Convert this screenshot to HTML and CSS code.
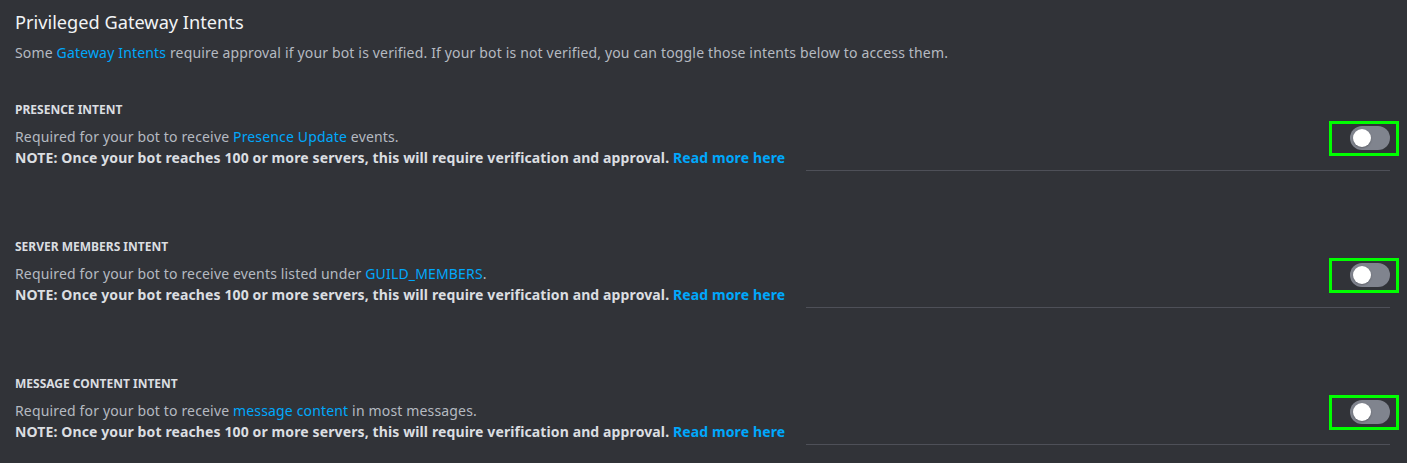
FILE: index.html
```html
<!DOCTYPE html>
<html>
<head>
<meta charset="utf-8">
<link rel="stylesheet" href="styles.css">
</head>
<body>
<div class="page">
  <h1 class="title">Privileged Gateway Intents</h1>
  <p class="desc">Some <a class="link" href="#">Gateway Intents</a> require approval if your bot is verified. If your bot is not verified, you can toggle those intents below to access them.</p>

  <section class="intent">
    <h2 class="label">PRESENCE INTENT</h2>
    <div class="row">
      <div class="text">
        <div class="line">Required for your bot to receive <a class="link" href="#">Presence Update</a> events.</div>
        <div class="note">NOTE: Once your bot reaches 100 or more servers, this will require verification and approval. <a class="link" href="#">Read more here</a></div>
      </div>
      <div class="side">
        <div class="hl"><div class="switch"><div class="knob"></div></div></div>
      </div>
    </div>
  </section>

  <section class="intent">
    <h2 class="label">SERVER MEMBERS INTENT</h2>
    <div class="row">
      <div class="text">
        <div class="line">Required for your bot to receive events listed under <a class="link" href="#">GUILD_MEMBERS</a>.</div>
        <div class="note">NOTE: Once your bot reaches 100 or more servers, this will require verification and approval. <a class="link" href="#">Read more here</a></div>
      </div>
      <div class="side">
        <div class="hl"><div class="switch"><div class="knob"></div></div></div>
      </div>
    </div>
  </section>

  <section class="intent">
    <h2 class="label">MESSAGE CONTENT INTENT</h2>
    <div class="row">
      <div class="text">
        <div class="line">Required for your bot to receive <a class="link" href="#">message content</a> in most messages.</div>
        <div class="note">NOTE: Once your bot reaches 100 or more servers, this will require verification and approval. <a class="link" href="#">Read more here</a></div>
      </div>
      <div class="side">
        <div class="hl"><div class="switch"><div class="knob"></div></div></div>
      </div>
    </div>
  </section>
</div>
</body>
</html>
```
FILE: styles.css
```css
html, body {
  margin: 0;
  padding: 0;
  background: #313338;
}
.page {
  padding: 10px 17px 0 15px;
  font-family: "Noto Sans", "Open Sans", sans-serif;
  color: #dbdee1;
}
.title {
  margin: 0;
  font-size: 18.2px;
  line-height: 24px;
  font-weight: 400;
  color: #f2f3f5;
}
.desc {
  margin: 9px 0 0;
  font-size: 14px;
  line-height: 20px;
  letter-spacing: 0.16px;
  color: #b5bac1;
}
.link {
  color: #00a8fc;
  text-decoration: none;
}
.intent {
  margin-top: 39px;
}
.intent + .intent {
  margin-top: 68px;
}
.label {
  margin: 0;
  font-size: 12px;
  line-height: 16px;
  font-weight: 700;
  color: #dbdee1;
}
.row {
  display: flex;
  margin-top: 9px;
}
.text {
  font-size: 14px;
  line-height: 20px;
  padding-bottom: 3px;
}
.line {
  color: #b5bac1;
  letter-spacing: 0.16px;
}
.note {
  margin-top: 1px;
  font-weight: 700;
  color: #dbdee1;
  letter-spacing: 0.12px;
}
.side {
  flex: 1;
  margin-left: 21px;
  border-bottom: 1px solid #4e5058;
  display: flex;
  justify-content: flex-end;
  align-items: flex-start;
}
.hl {
  border: 3px solid #00ff00;
  padding: 2px 6px 3px 18px;
  margin-right: -9px;
  margin-top: -6px;
}
.switch {
  width: 40px;
  height: 24px;
  border-radius: 12px;
  background: #80848e;
  position: relative;
}
.knob {
  position: absolute;
  left: 3px;
  top: 3px;
  width: 18px;
  height: 18px;
  border-radius: 50%;
  background: #ffffff;
  box-shadow: 0 1px 2px rgba(0, 0, 0, 0.25);
}
```
